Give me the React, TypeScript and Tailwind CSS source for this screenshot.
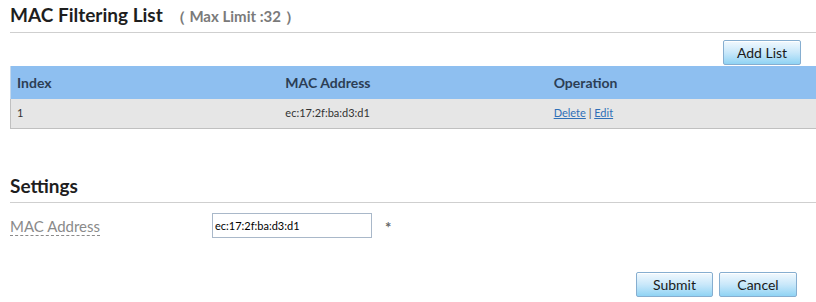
import React from "react";

const font = { fontFamily: "Lato, 'Open Sans', sans-serif" };

function Btn({ children, w }: { children: React.ReactNode; w: string }) {
  return (
    <button
      className={`${w} h-[25px] rounded-[2px] border border-[#86aed0] bg-gradient-to-b from-[#f2f9fe] via-[#c9e8fa] to-[#8fd3f4] text-[14px] text-[#1a1a1a] leading-none shadow-[inset_0_1px_0_#ffffff]`}
    >
      {children}
    </button>
  );
}

export default function App() {
  return (
    <div className="w-[816px] h-[302px] bg-white overflow-hidden" style={font}>
      <div className="pl-[10px]">
        <div className="h-[33px] flex items-end pb-[8px] border-b border-[#cfcfcf]">
          <span className="text-[19px] font-bold text-[#1e1e1e] leading-none">MAC Filtering List</span>
          <span className="ml-[8px] text-[15px] font-bold text-[#7a7a7a] leading-none">（ Max Limit :32 ）</span>
        </div>
        <div className="flex justify-end pr-[15px] pt-[7px] h-[33px]">
          <Btn w="w-[78px]">Add List</Btn>
        </div>
        <div className="grid grid-cols-3 h-[33px] items-center bg-[#8ebff0] border-l border-[#c4d8ec] text-[14px] font-bold text-[#2c3e55]">
          <div className="pl-[6px]">Index</div>
          <div className="pl-[6px]">MAC Address</div>
          <div className="pl-[6px]">Operation</div>
        </div>
        <div className="grid grid-cols-3 h-[30px] items-center bg-[#e6e6e6] border-l border-b border-[#c0c0c0] text-[11px] text-[#333]">
          <div className="pl-[6px]">1</div>
          <div className="pl-[6px]">ec:17:2f:ba:d3:d1</div>
          <div className="pl-[6px] text-[#2f70b8]">
            <a className="underline cursor-pointer">Delete</a>
            <span className="text-[#555]"> | </span>
            <a className="underline cursor-pointer">Edit</a>
          </div>
        </div>
        <div className="mt-[45px] h-[29px] flex items-end pb-[7px] border-b border-[#cfcfcf]">
          <span className="text-[19px] font-bold text-[#1e1e1e] leading-none">Settings</span>
        </div>
        <div className="flex items-center h-[37px] pt-[8px]">
          <div className="w-[202px]">
            <span className="text-[15px] text-[#8a8a8a] border-b border-dashed border-[#8a8a8a] leading-[18px] inline-block">
              MAC Address
            </span>
          </div>
          <input
            readOnly
            value="ec:17:2f:ba:d3:d1"
            className="w-[160px] h-[25px] border border-[#a9b8c9] px-[2px] text-[11px] text-black outline-none"
            style={font}
          />
          <span className="ml-[13px] text-[15px] font-bold text-[#666] self-start mt-[9px] leading-none">*</span>
        </div>
        <div className="flex justify-end gap-[6px] pr-[19px] pt-[32px]">
          <Btn w="w-[77px]">Submit</Btn>
          <Btn w="w-[78px]">Cancel</Btn>
        </div>
      </div>
    </div>
  );
}
